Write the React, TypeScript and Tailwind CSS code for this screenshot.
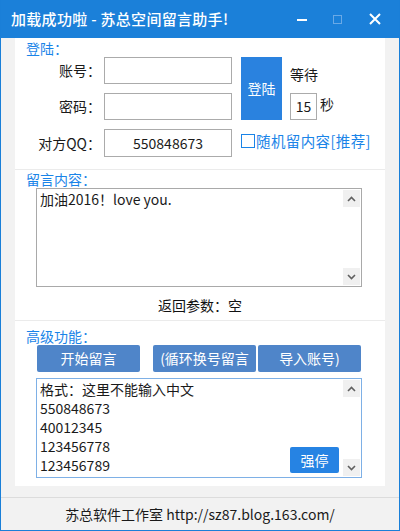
import React from 'react';

const font = { fontFamily: '"Noto Sans CJK SC", "Noto Sans", sans-serif' };

function ScrollArrows() {
  return (
    <div className="absolute right-[1px] top-[1px] bottom-[1px] w-[17px] flex flex-col justify-between">
      <div className="h-[17px] bg-[#f0f0f0] flex items-center justify-center">
        <svg width="9" height="6" viewBox="0 0 9 6">
          <path d="M1 5 L4.5 1.5 L8 5" fill="none" stroke="#606060" strokeWidth="1.6" />
        </svg>
      </div>
      <div className="h-[17px] bg-[#f0f0f0] flex items-center justify-center">
        <svg width="9" height="6" viewBox="0 0 9 6">
          <path d="M1 1 L4.5 4.5 L8 1" fill="none" stroke="#606060" strokeWidth="1.6" />
        </svg>
      </div>
    </div>
  );
}

function Field({ value }: { value?: string }) {
  return (
    <div className="h-full border border-[#ababab] bg-white flex items-center justify-center text-[14px] text-[#1a1a1a]">
      {value}
    </div>
  );
}

export default function App() {
  return (
    <div
      className="w-[400px] h-[531px] flex flex-col border-x border-b border-[#1a7fd8] bg-[#f2f2f2] overflow-hidden"
      style={font}
    >
      {/* title bar */}
      <div className="h-[38px] shrink-0 bg-[#1b80d9] flex items-center pl-[11px] -mx-px">
        <span className="text-white text-[15px] font-medium tracking-[0.3px]">
          加载成功啦 - 苏总空间留言助手!
        </span>
        <div className="ml-auto flex items-center">
          <div className="w-[44px] flex justify-center">
            <div className="w-[10px] h-[2px] bg-white mt-[1px]" />
          </div>
          <div className="w-[26px] flex justify-center">
            <div className="w-[9px] h-[9px] border border-[#6aa9e6]" />
          </div>
          <div className="w-[50px] flex justify-center">
            <svg width="12" height="12" viewBox="0 0 12 12">
              <path d="M1 1 L11 11 M11 1 L1 11" stroke="white" strokeWidth="2" />
            </svg>
          </div>
        </div>
      </div>

      {/* body */}
      <div className="flex-1 px-[14px] pb-[10px] flex flex-col">
        <div className="bg-white flex flex-col">
          {/* login section */}
          <div className="h-[132px] border-b border-[#ebebeb] pl-[11px] pt-[2px]">
            <div className="text-[#1a84e8] text-[14px] leading-[16px]">登陆：</div>
            <div className="mt-[1px] grid grid-cols-[78px_128px_50px_auto] grid-rows-[27px_27px_28px] gap-y-[9px] items-center">
              <div className="text-right pr-[3px] text-[14px] text-[#1a1a1a]">账号：</div>
              <Field />
              <div className="row-span-2 h-full pl-[9px]">
                <div className="w-[41px] h-full bg-[#2a82df] flex items-center justify-center text-white text-[14px]">
                  登陆
                </div>
              </div>
              <div className="pl-[8px] text-[14px] text-[#1a1a1a] self-end leading-[18px] pb-[1px]">等待</div>

              <div className="text-right pr-[3px] text-[14px] text-[#1a1a1a]">密码：</div>
              <Field />
              <div className="pl-[8px] flex items-center h-full">
                <div className="w-[27px] h-full border border-[#ababab] bg-white flex items-center justify-center text-[14px] text-[#1a1a1a]">
                  15
                </div>
                <span className="ml-[3px] text-[14px] text-[#1a1a1a] -mt-[4px]">秒</span>
              </div>

              <div className="text-right pr-[3px] text-[14px] text-[#1a1a1a] whitespace-nowrap">对方QQ：</div>
              <Field value="550848673" />
              <div className="col-span-2 pl-[9px] flex items-center -mt-[4px]">
                <div className="w-[14px] h-[14px] border border-[#1a84e8] bg-white" />
                <span className="ml-[1px] text-[14.5px] tracking-[0.4px] text-[#1a84e8] whitespace-nowrap">随机留内容[推荐]</span>
              </div>
            </div>
          </div>

          {/* message section */}
          <div className="h-[151px] border-b border-[#ebebeb] pl-[11px] pt-[1px]">
            <div className="text-[#1a84e8] text-[14px] leading-[16px]">留言内容：</div>
            <div className="relative ml-[10px] mt-[1px] w-[326px] h-[99px] border border-[#a9a9a9] bg-white">
              <div className="pl-[3px] pt-[1px] text-[14px] leading-[18px] text-[#1a1a1a]">加油2016！love you.</div>
              <ScrollArrows />
            </div>
            <div className="mt-[8px] text-center pr-[11px] text-[14px] text-[#111]">返回参数：空</div>
          </div>

          {/* advanced section */}
          <div className="h-[165px] pl-[11px] pt-[7px]">
            <div className="text-[#1a84e8] text-[14px] leading-[16px]">高级功能：</div>
            <div className="ml-[11px] mt-[1px] flex text-white text-[14px]">
              <div className="w-[103px] h-[27px] rounded-[2px] bg-[#4f85c9] flex items-center justify-center">开始留言</div>
              <div className="ml-[13px] w-[103px] h-[27px] rounded-[2px] bg-[#4f85c9] flex items-center justify-center">(循环换号留言</div>
              <div className="ml-[2px] w-[103px] h-[27px] rounded-[2px] bg-[#4f85c9] flex items-center justify-center">导入账号)</div>
            </div>
            <div className="relative ml-[10px] mt-[6px] w-[326px] h-[100px] border border-[#7eb0e6] bg-white">
              <div className="pl-[3px] pt-[1px] text-[14px] leading-[19px] text-[#1a1a1a]">
                <div>格式：这里不能输入中文</div>
                <div>550848673</div>
                <div>40012345</div>
                <div>123456778</div>
                <div>123456789</div>
              </div>
              <div className="absolute left-[253px] top-[68px] w-[49px] h-[26px] rounded-[2px] bg-[#2683e3] flex items-center justify-center text-white text-[14px]">
                强停
              </div>
              <ScrollArrows />
            </div>
          </div>
        </div>
      </div>

      {/* footer */}
      <div className="h-[33px] shrink-0 border-t border-[#dcdcdc] flex items-center justify-center text-[14px] text-[#1a1a1a]">
        苏总软件工作室 http://sz87.blog.163.com/
      </div>
    </div>
  );
}
